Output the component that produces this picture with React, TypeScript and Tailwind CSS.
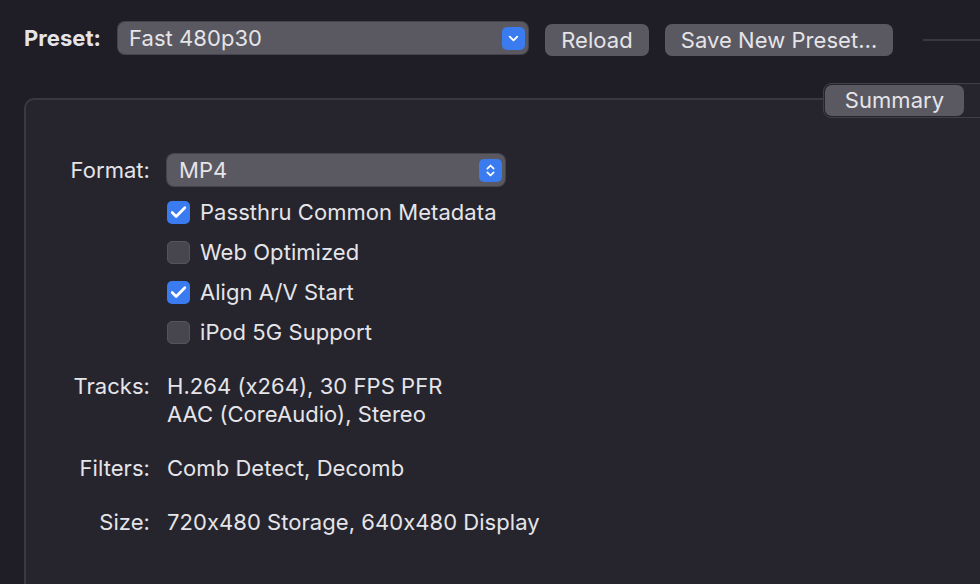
import { Check, ChevronDown, ChevronsUpDown } from 'lucide-react'

// Checkbox rows under the Format popup.
const OPTIONS = [
  { label: 'Passthru Common Metadata', on: true },
  { label: 'Web Optimized', on: false },
  { label: 'Align A/V Start', on: true },
  { label: 'iPod 5G Support', on: false },
]

export default function App() {
  return (
    <div className="h-[584px] w-[980px] overflow-hidden bg-[#1f1d26] font-['Inter','Noto_Sans','Liberation_Sans',sans-serif] text-[22px] tracking-[0.05px] text-[#e5e4e9] [font-feature-settings:'calt'_0]">
      {/* Preset toolbar */}
      <div className="flex items-start pl-6 pt-[22px]">
        <span className="flex h-8 w-[94px] items-center font-bold">Preset:</span>
        <div className="flex h-8 w-[410px] items-center justify-between rounded-[7px] bg-[#5a5860] pl-[11px] pr-[3px] shadow-[0_0_0_1px_#45434b]">
          <span>Fast 480p30</span>
          <span className="flex h-[23px] w-[23px] items-center justify-center rounded-[5px] bg-[#3a7cf0]">
            <ChevronDown size={15} strokeWidth={3} className="text-white" />
          </span>
        </div>
        <button className="ml-[17px] mt-[2px] h-8 w-[104px] rounded-[7px] bg-[#5a5860]">Reload</button>
        <button className="ml-4 mt-[2px] h-8 w-[228px] rounded-[7px] bg-[#5a5860]">Save New Preset…</button>
        <div className="ml-[30px] mt-[17px] h-[2px] flex-1 bg-[#393741]" />
      </div>

      {/* Settings panel */}
      <div className="relative ml-6 mr-[-40px] mt-[42px] h-[520px] rounded-[10px] border-2 border-[#3a3841] bg-[#26242d] pt-[54px]">
        {/* tab selector overlapping the panel edge */}
        <div className="absolute left-[797px] top-[-17px] flex h-[35px] w-[200px] rounded-[8px] border border-[#403e47] bg-[#26242d] p-px">
          <div className="flex h-full w-[139px] items-center justify-center rounded-[7px] bg-[#5a5860]">Summary</div>
        </div>

        <div className="grid grid-cols-[124px_1fr] gap-x-[17px]">
          <span className="flex h-8 items-center justify-end">Format:</span>
          <div className="flex h-8 w-[338px] items-center justify-between rounded-[7px] bg-[#5a5860] pl-[12px] pr-[3px] shadow-[0_0_0_1px_#45434b]">
            <span>MP4</span>
            <span className="flex h-[23px] w-[23px] items-center justify-center rounded-[5px] bg-[#3a7cf0]">
              <ChevronsUpDown size={15} strokeWidth={2.8} className="text-white" />
            </span>
          </div>

          <div />
          <div className="mt-[6px] flex flex-col">
            {OPTIONS.map((o) => (
              <div key={o.label} className="flex h-10 items-center gap-[10px]">
                {o.on ? (
                  <span className="flex h-[23px] w-[23px] items-center justify-center rounded-[5px] bg-[#3a7cf0]">
                    <Check size={19} strokeWidth={3.4} className="text-white" />
                  </span>
                ) : (
                  <span className="h-[23px] w-[23px] rounded-[5px] border border-[#55535b] bg-[#47454d]" />
                )}
                <span>{o.label}</span>
              </div>
            ))}
          </div>

          <span className="mt-5 text-right leading-[28px]">Tracks:</span>
          <div className="mt-5 leading-[28px]">
            <div>H.264 (x264), 30 FPS PFR</div>
            <div>AAC (CoreAudio), Stereo</div>
          </div>

          <span className="mt-[26px] text-right leading-[28px]">Filters:</span>
          <div className="mt-[26px] leading-[28px]">Comb Detect, Decomb</div>

          <span className="mt-[26px] text-right leading-[28px]">Size:</span>
          <div className="mt-[26px] leading-[28px]">720x480 Storage, 640x480 Display</div>
        </div>
      </div>
    </div>
  )
}
